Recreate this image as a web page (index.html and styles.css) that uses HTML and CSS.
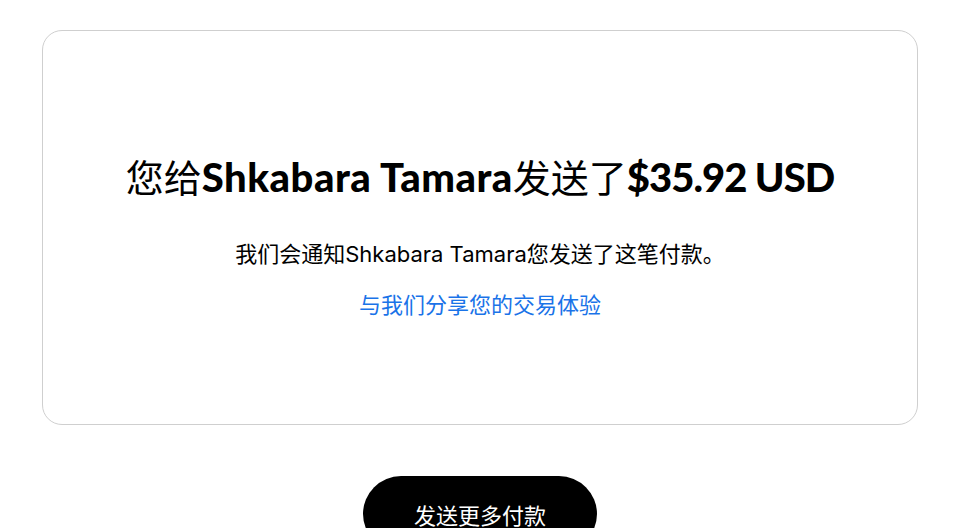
FILE: index.html
```html
<!DOCTYPE html>
<html lang="zh-CN">
<head>
    <meta charset="UTF-8">
    <meta name="viewport" content="width=device-width, initial-scale=1.0">
    <title>付款已发送</title>
    <link rel="stylesheet" href="styles.css">
</head>
<body>

    <!-- 付款结果卡片 -->
    <div class="result-card">
        <h1 class="result-title">您给<b class="payee">Shkabara Tamara</b>发送了<b class="amount">$35.92 USD</b></h1>
        <p class="result-note">我们会通知Shkabara Tamara您发送了这笔付款。</p>
        <a class="feedback-link" href="#">与我们分享您的交易体验</a>
    </div>

    <div class="actions">
        <button class="send-more">发送更多付款</button>
    </div>

</body>
</html>
```

FILE: styles.css
```css
body {
    margin: 0;
    padding: 30px 0 0;
    background-color: #fff;
    font-family: 'Inter', 'Noto Sans CJK SC', sans-serif;
    color: #000;
}

.result-card {
    margin: 0 46px 0 42px;
    height: 395px;
    border: 1px solid #cfcfcf;
    border-radius: 20px;
    display: flex;
    flex-direction: column;
    align-items: center;
    padding-top: 121px;
    box-sizing: border-box;
}

.result-title {
    margin: 0;
    font-size: 38px;
    line-height: 48px;
    font-weight: 400;
    font-family: 'Noto Sans CJK SC', sans-serif;
}

.result-title b {
    font-family: 'Lato', 'Noto Sans CJK SC', sans-serif;
    font-weight: 900;
    font-size: 40px;
}

.result-title .payee {
    letter-spacing: 0.5px;
}

.result-title .amount {
    letter-spacing: -1px;
}

.result-note {
    margin: 38px 0 0;
    font-size: 22px;
    line-height: 30px;
}

.feedback-link {
    display: block;
    margin-top: 21px;
    font-size: 22px;
    line-height: 30px;
    color: #1a73e8;
    text-decoration: none;
}

.actions {
    display: flex;
    justify-content: center;
    margin-top: 51px;
    padding-right: 4px;
}

.send-more {
    width: 234px;
    height: 76px;
    border: none;
    border-radius: 38px;
    background-color: #000;
    color: #fff;
    font-family: 'Noto Sans CJK SC', sans-serif;
    font-size: 22px;
}
```
